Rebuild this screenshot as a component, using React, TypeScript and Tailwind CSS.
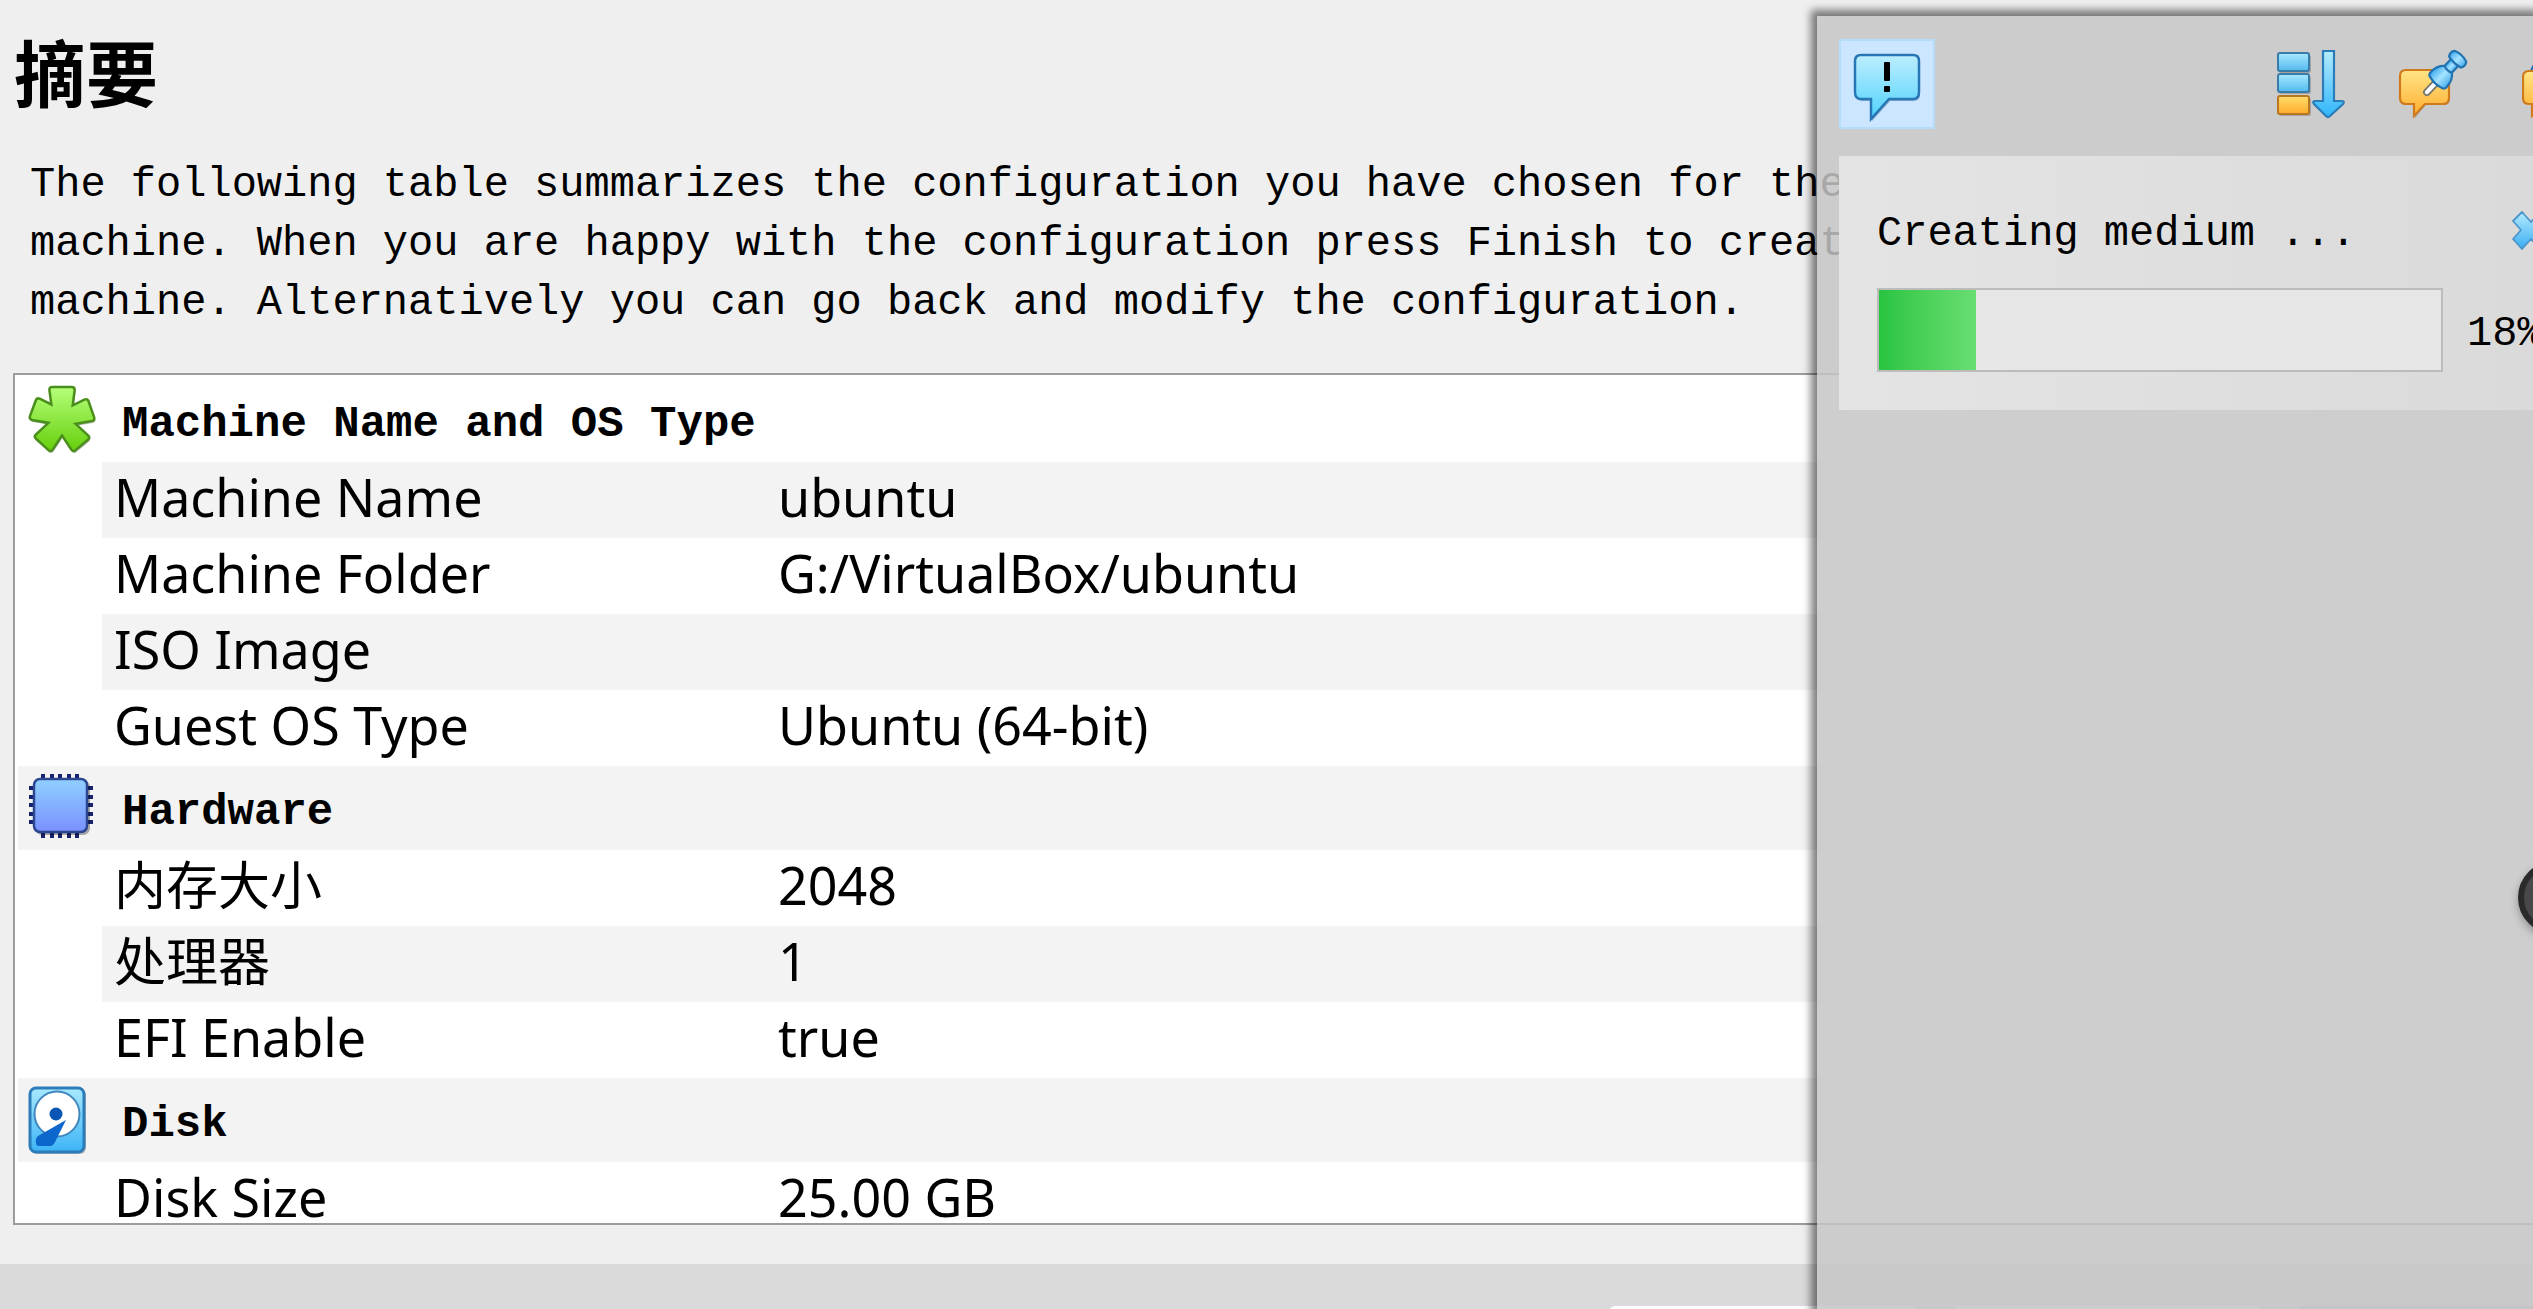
import React from "react";

const MONO = "font-['Liberation_Mono','Noto_Sans_CJK_SC',monospace]";

function Gradient({ id, from, to }: { id: string; from: string; to: string }) {
  return (
    <linearGradient id={id} x1="0" y1="0" x2="0" y2="1">
      <stop offset="0" stopColor={from} />
      <stop offset="1" stopColor={to} />
    </linearGradient>
  );
}

const ASTERISK =
  "M25 2h20q3 0 3 3l-2 16 12-6q3-1 4 1l6 17q1 3-2 4l-17 3 13 12q2 2 0 4L49 67q-2 2-4 0L35 52 25 67q-2 2-4 0L8 55q-2-2 0-4l13-12-17-3q-3-1-2-4l6-16q1-3 4-2l12 6-2-15q0-3 3-3z";

function AsteriskIcon() {
  return (
    <svg viewBox="0 0 72 72" className="h-[70px] w-[70px]" aria-hidden="true">
      <defs>
        <Gradient id="green" from="#b6ff7a" to="#66cf0c" />
      </defs>
      <path d={ASTERISK} transform="translate(1 2)" fill="#00000040" />
      <path d={ASTERISK} fill="url(#green)" stroke="#4a8f1c" strokeWidth="2.6" />
    </svg>
  );
}

function ChipIcon() {
  const pins = [12, 21, 29, 38, 46];
  return (
    <svg viewBox="0 0 70 70" className="h-[70px] w-[70px]" aria-hidden="true">
      <defs>
        <Gradient id="chip" from="#8fd0ff" to="#7a90ff" />
      </defs>
      {pins.map((p) => (
        <g key={p} fill="#16226e">
          <rect x={p + 1} y="1" width="4" height="6" />
          <rect x={p + 1} y="59" width="4" height="6" />
          <rect x="1" y={p + 1} width="6" height="4" />
          <rect x="59" y={p + 1} width="6" height="4" />
        </g>
      ))}
      <rect x="7" y="7" width="55" height="55" rx="7" fill="#00000050" />
      <rect x="6" y="6" width="53" height="53" rx="6" fill="url(#chip)" stroke="#2c4790" strokeWidth="2.5" />
    </svg>
  );
}

function DiskIcon() {
  return (
    <svg viewBox="0 0 70 70" className="h-[70px] w-[70px]" aria-hidden="true">
      <defs>
        <Gradient id="disk" from="#a8e9ff" to="#3db4f5" />
      </defs>
      <rect x="3" y="4" width="55" height="65" rx="6" fill="#00000040" />
      <rect x="2" y="3" width="54" height="64" rx="6" fill="url(#disk)" stroke="#2d7cba" strokeWidth="3" />
      <circle cx="29" cy="29" r="22.5" fill="#fff" stroke="#3f87be" strokeWidth="2" />
      <circle cx="28" cy="29" r="6.5" fill="#0b56b4" />
      <path d="M38 35L10 51q-3 3-2 7 0 3 3 3l11 0q3 0 5-4z" fill="#0c66cc" />
    </svg>
  );
}

function AlertBubbleIcon() {
  return (
    <svg viewBox="0 0 68 70" className="h-[70px] w-[68px]" aria-hidden="true">
      <defs>
        <Gradient id="alert" from="#bdeeff" to="#4fd2fb" />
      </defs>
      <path d="M8 3h52q6 0 6 6v31q0 7-6 7H36L18 67V47H8q-6 0-6-7V9q0-6 6-6z" transform="translate(1 1)" fill="#00336655" />
      <path d="M8 2h52q6 0 6 6v31q0 7-6 7H36L18 66V46H8q-6 0-6-7V8q0-6 6-6z" fill="url(#alert)" stroke="#2877b5" strokeWidth="2.5" />
      <rect x="31" y="9" width="6" height="19" rx="1" fill="#000" />
      <rect x="31" y="33" width="6" height="6" rx="1" fill="#000" />
    </svg>
  );
}

function SortIcon() {
  return (
    <svg viewBox="0 0 70 70" className="h-[70px] w-[70px]" aria-hidden="true">
      <defs>
        <Gradient id="sortBlue" from="#a8e9ff" to="#52b9ee" />
        <Gradient id="sortOrange" from="#ffdd6a" to="#ffac2c" />
        <Gradient id="sortArrow" from="#b5ecff" to="#2fb5fa" />
      </defs>
      <rect x="3" y="6" width="32" height="18" rx="2" fill="#0003" />
      <rect x="3" y="27" width="32" height="18" rx="2" fill="#0003" />
      <rect x="3" y="49" width="32" height="18" rx="2" fill="#0003" />
      <rect x="2" y="4" width="31" height="18" rx="2" fill="url(#sortBlue)" stroke="#3a7ca8" strokeWidth="2" />
      <rect x="2" y="25" width="31" height="18" rx="2" fill="url(#sortBlue)" stroke="#3a7ca8" strokeWidth="2" />
      <rect x="2" y="47" width="31" height="18" rx="2" fill="url(#sortOrange)" stroke="#b97620" strokeWidth="2" />
      <path d="M47 2h11v50h8q3 0 1 3L54 67q-2 2-4 0L38 55q-2-3 1-3h8z" fill="url(#sortArrow)" stroke="#2a7db8" strokeWidth="2.2" />
    </svg>
  );
}

function PinBubbleIcon() {
  return (
    <svg viewBox="0 0 70 70" className="h-[70px] w-[70px] overflow-visible" aria-hidden="true">
      <defs>
        <Gradient id="note" from="#ffe687" to="#ffad2e" />
        <linearGradient id="pin" x1="0" y1="0" x2="1" y2="0">
          <stop offset="0" stopColor="#3fa9ee" />
          <stop offset="0.5" stopColor="#a5e3ff" />
          <stop offset="1" stopColor="#48aeee" />
        </linearGradient>
      </defs>
      <path d="M7 21h37q6 0 6 6v22q0 6-6 6H26L15 68V55H7q-6 0-6-6V27q0-6 6-6z" transform="translate(1 1)" fill="#0003" />
      <path d="M7 21h37q6 0 6 6v22q0 6-6 6H26L15 67V55H7q-6 0-6-6V27q0-6 6-6z" fill="url(#note)" stroke="#cf7a1c" strokeWidth="2.2" />
      <g transform="rotate(43 43 27)" stroke="#2272b0" strokeWidth="2.2" strokeLinejoin="round">
        <rect x="40" y="34" width="6" height="18" rx="3" fill="#fff" stroke="#77776c" strokeWidth="1.8" />
        <path d="M38 7h10v13H38z" fill="url(#pin)" />
        <path d="M35 0q8-3 16 0 3 4 0 8-8 2-16 0-3-4 0-8z" fill="url(#pin)" />
        <path d="M38 18q5 2 10 0 6 4 6 15-1 3-4 3-7 2-14 0-3 0-4-3 0-11 6-15z" fill="url(#pin)" />
      </g>
    </svg>
  );
}

function BubbleStackIcon() {
  return (
    <svg viewBox="0 0 70 70" className="h-[70px] w-[70px]" aria-hidden="true">
      <defs>
        <Gradient id="stack" from="#ffe687" to="#ffad2e" />
      </defs>
      <path d="M8 30q0-18 20-26l20 6v20z" fill="#5bbdf2" stroke="#2272b0" strokeWidth="2.2" />
      <path d="M7 22h37q6 0 6 6v21q0 6-6 6H24L10 67V55H7q-6 0-6-6V28q0-6 6-6z" fill="url(#stack)" stroke="#cf7a1c" strokeWidth="2.2" />
    </svg>
  );
}

function CrossIcon() {
  return (
    <svg viewBox="0 0 40 40" className="h-10 w-10" aria-hidden="true">
      <defs>
        <Gradient id="cross" from="#b4eaff" to="#3aaef2" />
      </defs>
      <path
        d="M11 2l9 10 9-10 9 9-9 9 9 9-9 10-9-10-9 10-9-10 8-9-8-9z"
        fill="url(#cross)"
        stroke="#4a96cc"
        strokeWidth="1.8"
        strokeLinejoin="round"
      />
    </svg>
  );
}

type Section = { title: string; icon: React.ReactNode; striped: boolean; rows: [string, string][] };

const sections: Section[] = [
  {
    title: "Machine Name and OS Type",
    icon: <AsteriskIcon />,
    striped: false,
    rows: [
      ["Machine Name", "ubuntu"],
      ["Machine Folder", "G:/VirtualBox/ubuntu"],
      ["ISO Image", ""],
      ["Guest OS Type", "Ubuntu (64-bit)"],
    ],
  },
  {
    title: "Hardware",
    icon: <ChipIcon />,
    striped: true,
    rows: [
      ["内存大小", "2048"],
      ["处理器", "1"],
      ["EFI Enable", "true"],
    ],
  },
  { title: "Disk", icon: <DiskIcon />, striped: true, rows: [["Disk Size", "25.00 GB"]] },
];

function SummaryTable() {
  return (
    <table className="w-full table-fixed border-collapse text-left text-black">
      <colgroup>
        <col className="w-[84px]" />
        <col className="w-[664px]" />
        <col />
      </colgroup>
      {sections.map((section) => (
        <tbody key={section.title}>
          <tr className={section.striped ? "h-[84px] bg-[#f3f3f3]" : "h-[84px]"}>
            <th colSpan={3} scope="colgroup" className="p-0">
              <div className="flex items-center pl-[10px]">
                {section.icon}
                <span className={`pt-2 pl-6 text-[44px] leading-[60px] font-bold ${MONO}`}>{section.title}</span>
              </div>
            </th>
          </tr>
          {section.rows.map(([label, value], i) => {
            const cell = (i % 2 === 0) !== section.striped ? "bg-[#f3f3f3]" : "bg-white";
            return (
              <tr
                key={label}
                className="h-[76px] align-top font-['Noto_Sans','Noto_Sans_CJK_SC',sans-serif] text-[52px] leading-[70px]"
              >
                <td className="p-0" />
                <th scope="row" className={`p-0 pl-3 font-normal whitespace-nowrap ${cell}`}>
                  {label}
                </th>
                <td className={`p-0 pl-3 whitespace-nowrap ${cell}`}>{value}</td>
              </tr>
            );
          })}
        </tbody>
      ))}
    </table>
  );
}

function NotificationCenter() {
  return (
    <aside
      aria-label="Notifications"
      className="absolute top-4 right-0 bottom-0 w-[716px] bg-[#c6c6c6]/85 shadow-[0_0_8px_6px_rgba(0,0,0,0.5)]"
    >
      <div className="flex h-full flex-col overflow-hidden pl-[22px]">
        <div className="flex h-[140px] shrink-0 items-center pb-1">
          <button
            aria-label="Show notifications"
            className="flex h-[90px] w-24 shrink-0 items-center justify-center border-2 border-[#b5dcf8] bg-[#cce6ff] pt-2"
          >
            <AlertBubbleIcon />
          </button>
          <div className="-mr-[59px] ml-auto flex shrink-0 gap-[53px]">
            <button aria-label="Sort">
              <SortIcon />
            </button>
            <button aria-label="Keep finished">
              <PinBubbleIcon />
            </button>
            <button aria-label="Remove finished">
              <BubbleStackIcon />
            </button>
          </div>
        </div>
        <section className={`h-[254px] shrink-0 bg-gradient-to-r from-[#e4e4e4] to-[#dadada] pt-12 pl-[38px] ${MONO}`}>
          <div className="-mr-[18px] flex items-center justify-between">
            <h2 className="text-[42px] leading-[60px] whitespace-nowrap">Creating medium ...</h2>
            <button aria-label="Cancel" className="pb-2">
              <CrossIcon />
            </button>
          </div>
          <div className="mt-6 flex items-center gap-6">
            <div
              role="progressbar"
              aria-label="Creating medium"
              aria-valuenow={18}
              aria-valuemin={0}
              aria-valuemax={100}
              className="h-[84px] w-[566px] shrink-0 border-2 border-[#bcbcbc] bg-[#e6e6e6]"
            >
              <div className="h-full bg-gradient-to-r from-[#27c440] to-[#68de72]" style={{ width: "17.3%" }} />
            </div>
            <span className="pt-2 text-[42px] leading-[60px]">18%</span>
          </div>
        </section>
      </div>
      <button
        aria-label="Open side tool"
        className="absolute top-[845px] -right-[58px] h-[73px] w-[73px] rounded-full border-6 border-[#2a2a2a] bg-[#484848] shadow-[0_4px_8px_rgba(0,0,0,0.3)]"
      />
    </aside>
  );
}

export default function App() {
  return (
    <div className="relative flex h-screen flex-col overflow-hidden bg-[#efefef] text-black">
      <main className="flex min-h-0 flex-1 flex-col pb-[39px]">
        <h1 className="pt-6 pl-[14px] font-['Noto_Sans_CJK_SC',sans-serif] text-[72px] leading-[92px] font-bold">摘要</h1>
        <p className={`pt-10 pl-[30px] text-[42px] leading-[59px] whitespace-nowrap ${MONO}`}>
          The following table summarizes the configuration you have chosen for the
          <br />
          machine. When you are happy with the configuration press Finish to create
          <br />
          machine. Alternatively you can go back and modify the configuration.
        </p>
        <div className="mt-10 -mr-1 ml-[13px] min-h-0 flex-1 overflow-hidden border-2 border-[#9c9c9c] bg-white pt-[3px] pl-[3px]">
          <SummaryTable />
        </div>
      </main>
      <footer className="flex h-[45px] shrink-0 items-start justify-end gap-9 overflow-hidden bg-[#dadada] pt-[42px]">
        <button aria-label="Back" className="h-20 w-[308px] shrink-0 rounded-md bg-[#fdfdfd]" />
        <button aria-label="Finish" className="h-20 w-[308px] shrink-0 rounded-md bg-[#fdfdfd]" />
        <button aria-label="Cancel wizard" className="h-20 w-[236px] shrink-0 rounded-l-md bg-[#b8b8c8]" />
      </footer>
      <NotificationCenter />
    </div>
  );
}
